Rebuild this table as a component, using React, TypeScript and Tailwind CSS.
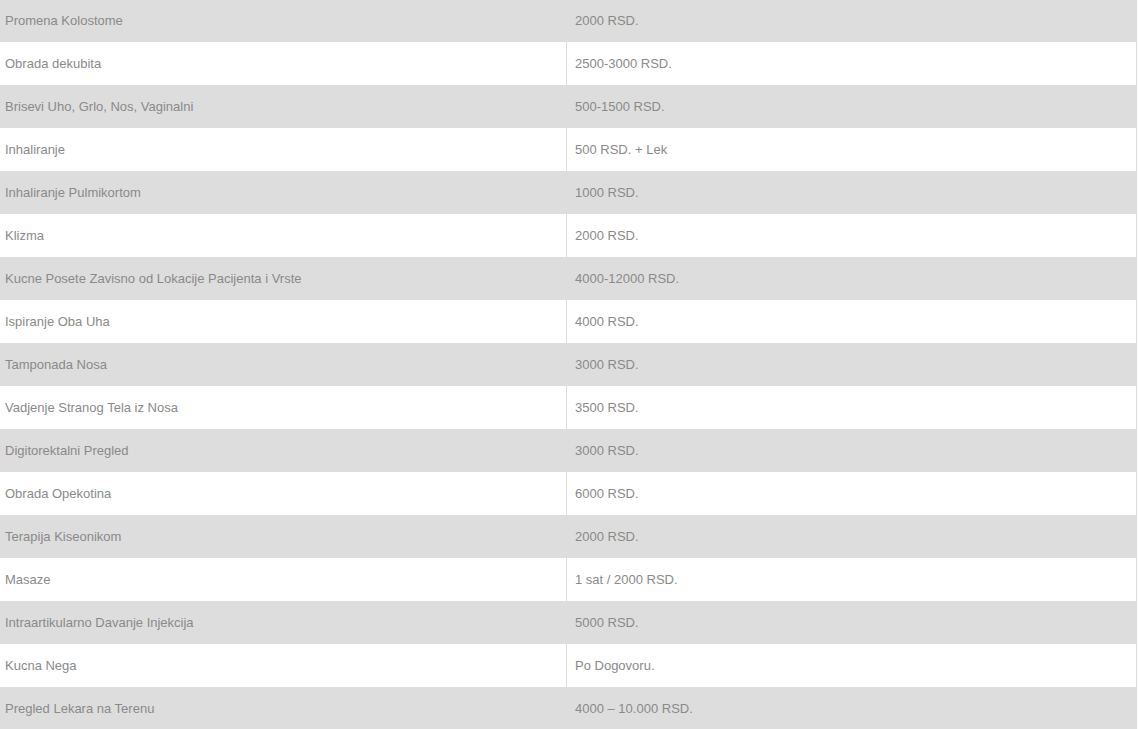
const rows: [string, string][] = [
  ["Promena Kolostome", "2000 RSD."],
  ["Obrada dekubita", "2500-3000 RSD."],
  ["Brisevi Uho, Grlo, Nos, Vaginalni", "500-1500 RSD."],
  ["Inhaliranje", "500 RSD. + Lek"],
  ["Inhaliranje Pulmikortom", "1000 RSD."],
  ["Klizma", "2000 RSD."],
  ["Kucne Posete Zavisno od Lokacije Pacijenta i Vrste", "4000-12000 RSD."],
  ["Ispiranje Oba Uha", "4000 RSD."],
  ["Tamponada Nosa", "3000 RSD."],
  ["Vadjenje Stranog Tela iz Nosa", "3500 RSD."],
  ["Digitorektalni Pregled", "3000 RSD."],
  ["Obrada Opekotina", "6000 RSD."],
  ["Terapija Kiseonikom", "2000 RSD."],
  ["Masaze", "1 sat / 2000 RSD."],
  ["Intraartikularno Davanje Injekcija", "5000 RSD."],
  ["Kucna Nega", "Po Dogovoru."],
  ["Pregled Lekara na Terenu", "4000 – 10.000 RSD."],
];

export default function App() {
  return (
    <div
      className="w-[1138px] h-[729px] overflow-hidden bg-white text-[13px] text-[#8a8a8a]"
      style={{ fontFamily: '"Liberation Sans", Arial, sans-serif' }}
    >
      <div className="flex flex-col w-[1137px]">
        {rows.map(([name, price], i) => (
          <div
            key={i}
            className={`flex ${i === 0 ? "h-[42px]" : "h-[43px]"} ${
              i % 2 === 0 ? "bg-[#dddddd]" : "bg-white"
            }`}
          >
            <div className="w-[567px] flex items-center pl-[5px] border-r border-[#dddddd]">
              {name}
            </div>
            <div className="w-[570px] flex items-center pl-[8px] border-r border-[#dddddd]">
              {price}
            </div>
          </div>
        ))}
      </div>
    </div>
  );
}
